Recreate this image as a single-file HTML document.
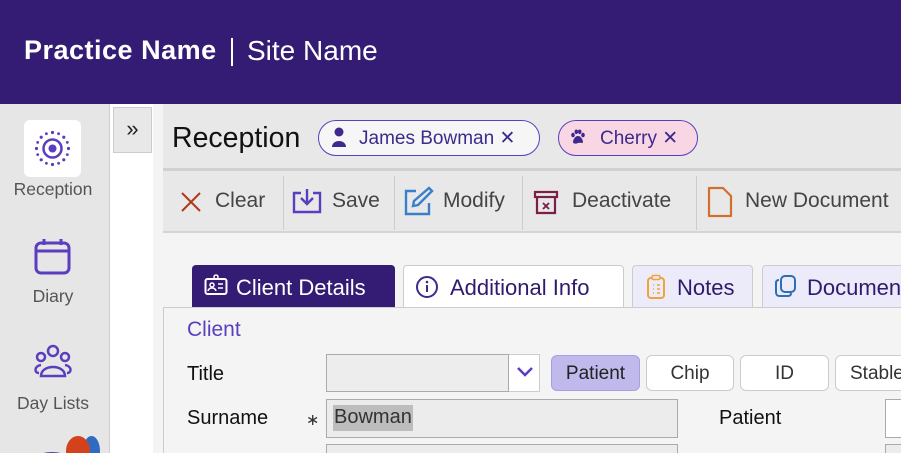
<!DOCTYPE html><html style="width:901px;height:453px;overflow:hidden"><head><style>
*{margin:0;padding:0;box-sizing:border-box}
body{width:901px;height:453px;overflow:hidden;background:#f4f4f4;font-family:"Liberation Sans",sans-serif;position:relative}
.a{position:absolute}
.hdr{left:0;top:0;width:901px;height:104px;background:#341b74;color:#fff}
.side{left:0;top:104px;width:110px;height:349px;background:#e6e6e6;border-right:1px solid #cfcfcf;overflow:hidden}
.col{left:110px;top:104px;width:43px;height:349px;background:#fff}
.lbl{width:106px;text-align:center;font-size:17.5px;color:#555}
.tb{font-size:21px;color:#444;top:189px}
.sep{top:176px;width:1px;height:54px;background:#ccc}
.tab{top:265px;height:43px;border:1px solid #ccc;border-bottom:none;border-radius:4px 4px 0 0;font-size:22px;color:#2f1a6e;padding:9px 0 0 12px;background:#ecebfa;overflow:hidden;white-space:nowrap}
.btn{top:355px;height:36px;border:1px solid #ccc;border-radius:6px;background:#fff;font-size:19px;color:#333;text-align:center;padding-top:7px}
.inp{background:#ececec;border:1px solid #aaa}
</style></head><body>
<div class="a hdr"><div class="a" style="left:24px;top:35px;font-size:27px;font-weight:bold;letter-spacing:0.5px">Practice Name</div><div class="a" style="left:231px;top:38px;width:2px;height:28px;background:#fff"></div><div class="a" style="left:247px;top:35px;font-size:28px">Site Name</div></div>
<div class="a side">
<div class="a" style="left:24px;top:16px;width:57px;height:57px;background:#fff;border-radius:6px"><svg width="57" height="57" viewBox="0 0 57 57"><g fill="#5b3dbf"><circle cx="28.5" cy="28.5" r="4"/></g><circle cx="28.5" cy="28.5" r="9" fill="none" stroke="#5b3dbf" stroke-width="2.5"/><g fill="#5b3dbf"><circle cx="28.5" cy="12.5" r="1.6"/><circle cx="28.5" cy="44.5" r="1.6"/><circle cx="12.5" cy="28.5" r="1.6"/><circle cx="44.5" cy="28.5" r="1.6"/><circle cx="17.2" cy="17.2" r="1.6"/><circle cx="39.8" cy="39.8" r="1.6"/><circle cx="39.8" cy="17.2" r="1.6"/><circle cx="17.2" cy="39.8" r="1.6"/><circle cx="22.4" cy="13.7" r="1.4"/><circle cx="34.6" cy="13.7" r="1.4"/><circle cx="22.4" cy="43.3" r="1.4"/><circle cx="34.6" cy="43.3" r="1.4"/><circle cx="13.7" cy="22.4" r="1.4"/><circle cx="13.7" cy="34.6" r="1.4"/><circle cx="43.3" cy="22.4" r="1.4"/><circle cx="43.3" cy="34.6" r="1.4"/></g></svg></div>
<div class="a lbl" style="top:75px">Reception</div>
<svg class="a" style="left:34px;top:134px" width="38" height="38" viewBox="0 0 38 38"><rect x="2" y="5" width="33" height="30" rx="5" fill="none" stroke="#5b3dbf" stroke-width="3"/><line x1="2" y1="13" x2="35" y2="13" stroke="#5b3dbf" stroke-width="3"/><line x1="10" y1="1" x2="10" y2="7" stroke="#5b3dbf" stroke-width="3"/><line x1="27" y1="1" x2="27" y2="7" stroke="#5b3dbf" stroke-width="3"/></svg>
<div class="a lbl" style="top:182px">Diary</div>
<svg class="a" style="left:33px;top:240px" width="40" height="36" viewBox="0 0 40 36"><g fill="none" stroke="#5b3dbf" stroke-width="2.5"><circle cx="20" cy="7" r="5"/><circle cx="8" cy="13" r="4"/><circle cx="32" cy="13" r="4"/><path d="M8 32c0-12 24-12 24 0z"/><path d="M6 29c-5 0-5-7 2-8M34 29c5 0 5-7-2-8"/></g></svg>
<div class="a lbl" style="top:289px">Day Lists</div>
<div class="a" style="left:83px;top:332px;width:17px;height:30px;border-radius:50%;background:#2f6bc0"></div>
<div class="a" style="left:66px;top:332px;width:24px;height:30px;border-radius:50%;background:#d3421d"></div>
<div class="a" style="left:38px;top:348px;width:28px;height:10px;border-top:3px solid #5b3dbf;border-radius:50%"></div>
</div>
<div class="a col"></div>
<div class="a" style="left:113px;top:107px;width:39px;height:46px;background:#e8e8e8;border:1px solid #ccc;font-size:22px;text-align:center;padding-top:8px;color:#222">»</div>
<div class="a" style="left:163px;top:104px;width:738px;height:129px;background:#e8e8e8;border-bottom:2px solid #d4d4d4"></div>
<div class="a" style="left:163px;top:168px;width:738px;height:3px;background:#d0d0d0"></div>
<div class="a" style="left:172px;top:122px;font-size:28.5px;color:#111">Reception</div>
<div class="a" style="left:318px;top:120px;width:222px;height:36px;border:1.5px solid #5b3dbf;border-radius:18px;background:#f6f6f6;color:#3d2a8c;font-size:19px;padding:6px 0 0 40px">James Bowman ✕</div>
<svg class="a" style="left:331px;top:127px" width="16" height="22" viewBox="0 0 16 22"><circle cx="8" cy="5" r="4.5" fill="#3d2a8c"/><path d="M1 20c0-8 14-8 14 0z" fill="#3d2a8c"/></svg>
<div class="a" style="left:558px;top:120px;width:140px;height:36px;border:1.5px solid #5b3dbf;border-radius:18px;background:#f8d6e3;color:#3d2a8c;font-size:19px;padding:6px 0 0 41px">Cherry ✕</div>
<svg class="a" style="left:570px;top:129px" width="16" height="16" viewBox="0 0 16 16" fill="#3d2a8c"><ellipse cx="3" cy="6" rx="1.8" ry="2.3"/><ellipse cx="6.3" cy="2.8" rx="1.8" ry="2.3"/><ellipse cx="9.7" cy="2.8" rx="1.8" ry="2.3"/><ellipse cx="13" cy="6" rx="1.8" ry="2.3"/><path d="M8 7c-3 0-5 4-5 6s3 2 5 1 5 1 5-1-2-6-5-6z"/></svg>
<svg class="a" style="left:180px;top:191px" width="22" height="22"><path d="M2 2L20 20M20 2L2 20" stroke="#b0391c" stroke-width="2"/></svg>
<div class="a tb" style="left:215px">Clear</div>
<div class="a sep" style="left:283px"></div>
<svg class="a" style="left:291px;top:187px" width="32" height="28"><path d="M10 6H3v19h26V6h-7M16 2v15M10 11l6 6 6-6" fill="none" stroke="#5b3dbf" stroke-width="2.4"/></svg>
<div class="a tb" style="left:332px">Save</div>
<div class="a sep" style="left:394px"></div>
<svg class="a" style="left:402px;top:185px" width="32" height="32"><path d="M14 6H4v23h23V18" fill="none" stroke="#3a7fc9" stroke-width="2.4"/><path d="M27 3l3 3-14 14-5 1 1-5z" fill="none" stroke="#3a7fc9" stroke-width="2.4"/></svg>
<div class="a tb" style="left:443px">Modify</div>
<div class="a sep" style="left:522px"></div>
<svg class="a" style="left:533px;top:190px" width="26" height="26"><rect x="2" y="2" width="22" height="5" fill="none" stroke="#7a1f45" stroke-width="2.2"/><path d="M4 7v16h18V7" fill="none" stroke="#7a1f45" stroke-width="2.2"/><path d="M10 13l6 6M16 13l-6 6" stroke="#7a1f45" stroke-width="1.8"/></svg>
<div class="a tb" style="left:572px">Deactivate</div>
<div class="a sep" style="left:696px"></div>
<svg class="a" style="left:707px;top:186px" width="26" height="32"><path d="M2 2h14l8 8v20H2z" fill="none" stroke="#d1702e" stroke-width="2.2" stroke-linejoin="round"/></svg>
<div class="a tb" style="left:745px">New Document</div>
<div class="a tab" style="left:192px;width:203px;background:#341b74;color:#fff;border-color:#341b74;padding-left:43px">Client Details</div>
<svg class="a" style="left:204px;top:274px" width="24" height="22"><rect x="1.5" y="5" width="21" height="15" rx="2" fill="none" stroke="#fff" stroke-width="2"/><circle cx="12" cy="3" r="2" fill="none" stroke="#fff" stroke-width="1.5"/><circle cx="8" cy="11" r="2" fill="none" stroke="#fff" stroke-width="1.5"/><path d="M4 17c1-4 7-4 8 0M14 10h5M14 14h5" stroke="#fff" stroke-width="1.5" fill="none"/></svg>
<div class="a tab" style="left:403px;width:221px;background:#fff;padding-left:46px">Additional Info</div>
<svg class="a" style="left:415px;top:275px" width="24" height="24"><circle cx="12" cy="12" r="10" fill="none" stroke="#3d2a8c" stroke-width="2"/><path d="M12 10v7" stroke="#3d2a8c" stroke-width="2"/><circle cx="12" cy="7" r="1.3" fill="#3d2a8c"/></svg>
<div class="a tab" style="left:632px;width:121px;padding-left:44px">Notes</div>
<svg class="a" style="left:646px;top:274px" width="20" height="26"><rect x="2" y="4" width="16" height="20" rx="3" fill="none" stroke="#f0a33a" stroke-width="2"/><rect x="6" y="1.5" width="8" height="4" rx="1.5" fill="#ecebfa" stroke="#f0a33a" stroke-width="1.6"/><path d="M7 11h1M7 15h1M7 19h1M11 11h3M11 15h3M11 19h3" stroke="#f0a33a" stroke-width="1.5"/></svg>
<div class="a tab" style="left:762px;width:150px;padding-left:44px">Documents</div>
<svg class="a" style="left:774px;top:274px" width="24" height="24"><rect x="7" y="2" width="14" height="16" rx="4" fill="none" stroke="#2e6fb4" stroke-width="2"/><path d="M5 6c-2 0-3 1-3 3v9c0 3 1 4 4 4h8c2 0 3-1 3-3" fill="none" stroke="#2e6fb4" stroke-width="2"/></svg>
<div class="a" style="left:163px;top:307px;width:738px;height:146px;border-left:1px solid #ccc;border-top:1px solid #ccc;background:#f4f4f4;overflow:hidden">
<div class="a" style="left:23px;top:10px;font-size:21px;color:#5b3dbf">Client</div>
<div class="a" style="left:23px;top:55px;font-size:20px;color:#111">Title</div>
<div class="a inp" style="left:162px;top:46px;width:183px;height:38px;background:#ededed"></div>
<div class="a" style="left:345px;top:46px;width:31px;height:38px;background:#fff;border:1px solid #ccc;border-left:none"></div>
<svg class="a" style="left:351px;top:58px" width="20" height="12"><path d="M3 2l7 7 7-7" fill="none" stroke="#5b3dbf" stroke-width="2.5"/></svg>
<div class="a btn" style="left:387px;top:47px;width:89px;background:#c0b9eb;border-color:#a99ee2;color:#222">Patient</div>
<div class="a btn" style="left:482px;top:47px;width:88px">Chip</div>
<div class="a btn" style="left:576px;top:47px;width:89px">ID</div>
<div class="a btn" style="left:671px;top:47px;width:90px;text-align:left;padding-left:14px">Stable</div>
<div class="a" style="left:23px;top:99px;font-size:20px;color:#111">Surname</div>
<div class="a" style="left:142px;top:102px;font-size:16px;color:#333">∗</div>
<div class="a inp" style="left:162px;top:91px;width:352px;height:39px"></div>
<div class="a" style="left:169px;top:97px;height:26px;background:#bdbdbd;font-size:20px;color:#333;padding:1px 1px">Bowman</div>
<div class="a" style="left:555px;top:99px;font-size:20px;color:#111">Patient</div>
<div class="a" style="left:721px;top:91px;width:30px;height:39px;background:#fff;border:1px solid #aaa"></div>
<div class="a inp" style="left:162px;top:136px;width:352px;height:20px"></div>
<div class="a inp" style="left:721px;top:136px;width:30px;height:20px"></div>
</div>
</body></html>
